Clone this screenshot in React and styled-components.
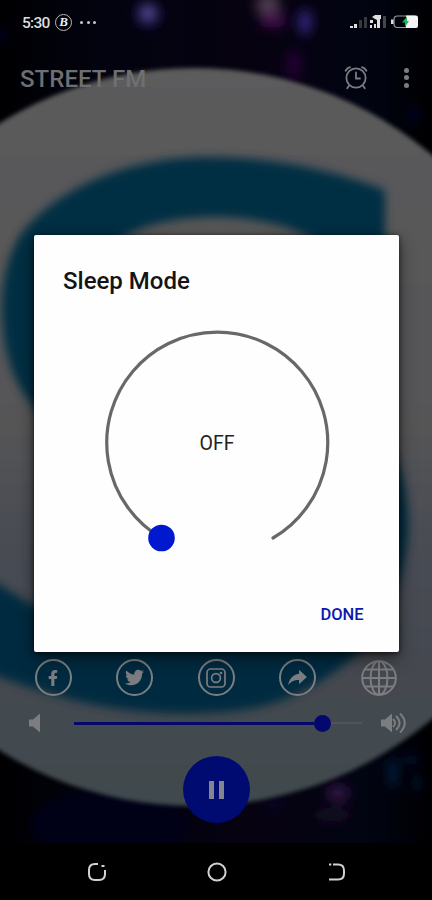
import styled, { createGlobalStyle } from "styled-components";
import { FaFacebookF, FaTwitter } from "react-icons/fa";
import { IoMdShareAlt } from "react-icons/io";

const colors = {
  blue: "#0019cf",
  dimBlue: "#03076e",
  icon: "#7c7d80",
  nav: "#d2d2d2",
};

/* BACKDROP ----------------------------------------------------------------- */
const StreetLogo = () => (
  <StBackdrop viewBox="0 0 432 900" aria-hidden="true">
    <defs>
      <linearGradient id="night" x1="0" y1="0" x2="1" y2="0">
        <stop offset="0" stopColor="#000003" />
        <stop offset="0.25" stopColor="#02030f" />
        <stop offset="0.6" stopColor="#070211" />
        <stop offset="0.85" stopColor="#010411" />
        <stop offset="1" stopColor="#000002" />
      </linearGradient>
      <linearGradient id="disc" x1="0" y1="0" x2="0" y2="1">
        <stop offset="0" stopColor="#5b5b5b" />
        <stop offset="0.45" stopColor="#565658" />
        <stop offset="0.68" stopColor="#474b52" />
        <stop offset="1" stopColor="#414a4e" />
      </linearGradient>
      <linearGradient id="letter" x1="0" y1="0" x2="0" y2="1">
        <stop offset="0" stopColor="#002e43" />
        <stop offset="1" stopColor="#002b40" />
      </linearGradient>
      <filter id="soft2" x="-10%" y="-10%" width="120%" height="120%">
        <feGaussianBlur stdDeviation="2" />
      </filter>
      <filter id="soft5" x="-10%" y="-10%" width="120%" height="120%">
        <feGaussianBlur stdDeviation="5" />
      </filter>
      <filter id="glow" x="-100%" y="-100%" width="300%" height="300%">
        <feGaussianBlur stdDeviation="6" />
      </filter>
    </defs>
    <rect width="432" height="900" fill="url(#night)" />
    <g filter="url(#glow)">
      <circle cx="148" cy="14" r="13" fill="#1c1850" />
      <circle cx="148" cy="13" r="5" fill="#655ca8" />
      <ellipse cx="268" cy="5" rx="12" ry="12" fill="#4d3b4d" />
      <ellipse cx="273" cy="20" rx="13" ry="8" fill="#420a4b" />
      <ellipse cx="305" cy="22" rx="7" ry="13" fill="#33227b" />
      <ellipse cx="294" cy="65" rx="8" ry="16" fill="#220430" />
      <circle cx="414" cy="115" r="5" fill="#070640" />
      <circle cx="1" cy="35" r="5" fill="#05043b" />
      <ellipse cx="110" cy="825" rx="80" ry="35" fill="#010412" />
      <ellipse cx="338" cy="793" rx="12" ry="8" fill="#331246" />
      <ellipse cx="332" cy="815" rx="20" ry="7" fill="#160821" />
      <circle cx="276" cy="805" r="5" fill="#14093a" />
      <ellipse cx="393" cy="773" rx="4" ry="16" fill="#07214c" />
      <ellipse cx="411" cy="760" rx="8" ry="6" fill="#06102f" />
      <ellipse cx="417" cy="783" rx="3" ry="10" fill="#06163d" />
    </g>
    <circle
      cx="194"
      cy="437"
      r="369"
      fill="url(#disc)"
      filter="url(#soft2)"
    />
    <g filter="url(#soft5)">
      <path
        d="M385 190C325 167 265 157 205 157C125 158 60 188 24 230C-4 267 -2 330 12 370C35 432 100 460 200 475L290 520L230 610L100 625L34 606L-20 573V670C35 690 90 710 165 713C250 716 290 703 330 675C376 646 406 585 408 530C409 455 380 410 300 390L120 330L118 242C155 209 270 210 314 240L385 290Z"
        fill="url(#letter)"
      />
    </g>
    <rect y="843" width="432" height="57" fill="#000" />
  </StBackdrop>
);

/* ICONS -------------------------------------------------------------------- */
const StatusIcons = () => (
  <svg width="72" height="18" viewBox="348 13 72 18" fill="#dedede">
    <path d="M350 26h3v2h-3zM354 24h3v4h-3z" />
    <path d="M359 20h3v8h-3zM364 17h3v11h-3z" fill="#38383d" />
    <path d="M370 25h2v3h-2zM370 20h3v3h-3zM372 17l3-2h6v4h-1v9h-3v-8l-2-1zM374 24h2v4h-2z" />
    <path d="M383 16h3v12h-3z" fill="#45454a" />
    <rect x="394" y="16" width="23" height="11.500" rx="3.500" fill="none" stroke="#999" strokeWidth="1.200" />
    <path d="M391 19.500h2.500v4.500h-2.500z" />
    <path d="M406 15.500h10q2 0 2 2v8.500q0 2-2 2h-10z" fill="#f4f4f4" />
    <path d="M407 16.500l-5 6h3v4.500l4-6h-2z" fill="#20b45a" />
  </svg>
);

const AlarmIcon = () => (
  <svg width="24" height="24" viewBox="0 0 24 24" fill="none" stroke={colors.icon} strokeWidth="1.8" strokeLinecap="round">
    <circle cx="12" cy="12" r="9.6" />
    <path d="M12 6.5V12.500h4" />
    <path d="M1.6 4.800Q3 2.300 6 1.200M22.4 4.800Q21 2.300 18 1.200M4.800 20l-1.600 2.300M19.200 20l1.600 2.300" />
  </svg>
);

const InstagramIcon = () => (
  <svg width="20" height="20" viewBox="0 0 20 20" fill="none" stroke={colors.icon} strokeWidth="1.7">
    <rect x="1" y="1" width="18" height="18" rx="3.500" />
    <circle cx="10" cy="10" r="4.4" />
    <circle cx="15" cy="5" r="0.5" />
  </svg>
);

const GlobeIcon = () => (
  <svg width="36" height="36" viewBox="0 0 36 36" fill="none" stroke={colors.icon} strokeWidth="2">
    <circle cx="18" cy="18" r="16.8" />
    <ellipse cx="18" cy="18" rx="8.5" ry="16.8" />
    <path d="M18 1v34M1 18h34M4 9.5h28M4 26.5h28" />
  </svg>
);

const SpeakerIcon = ({ loud }) => (
  <svg width={loud ? 27 : 14} height="22" viewBox={`0 0 ${loud ? 27 : 14} 22`} fill={colors.icon}>
    <path d="M1 7.5h4L12 1.5v19L5 14.5H1z" />
    {loud && (
      <g fill="none" stroke={colors.icon} strokeWidth="1.9">
        <path d="M13 7q4 4 0 8M16 4q7 7 0 14M20 1.5q9.500 9.500 0 19" />
      </g>
    )}
  </svg>
);

const SOCIALS = [
  { name: "facebook", icon: <FaFacebookF size={16} /> },
  { name: "twitter", icon: <FaTwitter size={19} /> },
  { name: "instagram", icon: <InstagramIcon /> },
  { name: "share", icon: <IoMdShareAlt size={25} /> },
  { name: "website", icon: <GlobeIcon />, plain: true },
];

const App = () => {
  return (
    <Screen>
      <GlobalStyle />
      <StreetLogo />
      <StatusBar>
        <StTime>5:30</StTime>
        <StBadge>B</StBadge>
        <StDots>
          <i />
          <i />
          <i />
        </StDots>
        <StatusIcons />
      </StatusBar>
      <Toolbar>
        <h1>STREET FM</h1>
        <AlarmIcon />
        <StMenu>
          <i />
          <i />
          <i />
        </StMenu>
      </Toolbar>
      <Player>
        <SocialRow>
          {SOCIALS.map(({ name, icon, plain }) => (
            <SocialButton key={name} aria-label={name} $plain={plain}>
              {icon}
            </SocialButton>
          ))}
        </SocialRow>
        <VolumeRow>
          <SpeakerIcon />
          <StTrack>
            <StFill />
            <StThumb />
            <StRest />
          </StTrack>
          <SpeakerIcon loud />
        </VolumeRow>
        <PlayButton aria-label="pause">
          <i />
          <i />
        </PlayButton>
      </Player>
      <NavBar>
        <svg width="20" height="20" viewBox="0 0 20 20">
          <path d="M11 2H8Q2 2 2 8v4q0 6 6 6h4q6 0 6-6V8" />
          <path d="M14.500 4h3" />
        </svg>
        <svg width="20" height="20" viewBox="0 0 20 20">
          <circle cx="10" cy="10" r="8.600" />
        </svg>
        <svg width="20" height="20" viewBox="0 0 20 20">
          <path d="M2 2.500h2.300M6 2.500H11q6 0 6 6v3q0 6-6 6H2" />
        </svg>
      </NavBar>
      <DialogLayer>
        <Dialog role="dialog">
          <h2>Sleep Mode</h2>
          <Dial>
            <svg width="240" height="240" viewBox="0 0 240 240">
              <path d="M64.500 215A110.500 110.500 0 1 1 176 215" fill="none" stroke="#686868" strokeWidth="3.200" strokeLinecap="round" />
              <circle cx="64.500" cy="215" r="13.300" fill={colors.blue} />
            </svg>
            <span>OFF</span>
          </Dial>
          <DoneButton>DONE</DoneButton>
        </Dialog>
      </DialogLayer>
    </Screen>
  );
};

export default App;

const GlobalStyle = createGlobalStyle`
  * {
    box-sizing: border-box;
  }

  body {
    margin: 0;
    background: #000;
    font-family: Roboto, sans-serif;
  }

  h1, h2 {
    margin: 0;
  }

  button {
    padding: 0;
    border: none;
    background: none;
    font-family: inherit;
  }

  svg {
    display: block;
    flex: none;
  }
`;

const Screen = styled.main`
  position: relative;
  display: flex;
  flex-direction: column;
  width: 432px;
  height: 900px;
  overflow: hidden;
`;

const StBackdrop = styled.svg`
  position: absolute;
  inset: 0;
  z-index: -1;
  width: 432px;
  height: 900px;
`;

const StatusBar = styled.header`
  display: flex;
  align-items: center;
  height: 44px;
  padding: 0 12px 0 22px;

  > svg {
    margin-left: auto;
  }
`;

const StTime = styled.span`
  width: 33px;
  padding-top: 1px;
  color: #dedede;
  font-size: 15.5px;
  font-weight: 500;
  letter-spacing: -0.7px;
`;

const StBadge = styled.span`
  display: flex;
  align-items: center;
  justify-content: center;
  width: 17px;
  height: 17px;
  border: 1.5px solid #b8b8b8;
  border-radius: 50%;
  color: #eee;
  font: italic bold 13px "Liberation Serif", serif;
`;

const StDots = styled.span`
  display: flex;
  gap: 3.5px;
  margin-left: 8px;

  i {
    width: 3px;
    height: 3px;
    border-radius: 50%;
    background: #c8c8c8;
  }
`;

const Toolbar = styled.div`
  display: flex;
  align-items: center;
  height: 67px;
  padding: 0 23px 0 20px;

  h1 {
    flex: 1;
    padding-top: 2px;
    color: #6e6f72;
    font-size: 24px;
    font-weight: 500;
    letter-spacing: 0.05px;
  }
`;

const StMenu = styled.div`
  display: flex;
  flex-direction: column;
  gap: 2.5px;
  margin-left: 36px;

  i {
    width: 5px;
    height: 5px;
    border-radius: 50%;
    background: ${colors.icon};
  }
`;

const Player = styled.section`
  display: flex;
  flex: 1;
  flex-direction: column;
  align-items: center;
  justify-content: flex-end;
  padding-bottom: 20px;
`;

const SocialRow = styled.div`
  display: flex;
  justify-content: space-between;
  width: 363px;
  margin-bottom: 16px;
`;

const SocialButton = styled.button`
  display: flex;
  align-items: center;
  justify-content: center;
  width: 37px;
  height: 37px;
  border: ${({ $plain }) => ($plain ? "none" : `2px solid ${colors.icon}`)};
  border-radius: 50%;
  color: ${colors.icon};
`;

const VolumeRow = styled.div`
  display: flex;
  align-items: center;
  justify-content: space-between;
  width: 100%;
  height: 22px;
  margin-bottom: 22px;
  padding: 0 25px 0 28px;
`;

const StTrack = styled.div`
  display: flex;
  align-items: center;
  width: 288px;
  margin-left: 13px;
`;

const StFill = styled.div`
  width: 240px;
  height: 3px;
  background: ${colors.dimBlue};
`;

const StThumb = styled.div`
  width: 17px;
  height: 17px;
  border-radius: 50%;
  background: ${colors.dimBlue};
`;

const StRest = styled.div`
  flex: 1;
  height: 2px;
  background: #50555b;
`;

const PlayButton = styled.button`
  display: flex;
  align-items: center;
  justify-content: center;
  gap: 5px;
  width: 67px;
  height: 67px;
  margin-left: 1px;
  border-radius: 50%;
  background: #000b72;

  i {
    width: 5px;
    height: 18px;
    background: #85868d;
  }
`;

const NavBar = styled.nav`
  display: flex;
  align-items: center;
  justify-content: center;
  gap: 100px;
  height: 57px;
  padding-left: 1px;

  svg {
    fill: none;
    stroke: ${colors.nav};
    stroke-width: 2;
  }
`;

const DialogLayer = styled.div`
  position: absolute;
  inset: 0;
  display: flex;
  justify-content: center;
  padding: 235px 0 0 1px;
`;

const Dialog = styled.section`
  display: flex;
  flex-direction: column;
  align-items: center;
  width: 365px;
  height: 417px;
  padding: 30px 28px 0 29px;
  border-radius: 2px;
  background: #fefefe;
  box-shadow: 0 6px 16px rgba(0, 0, 0, 0.5), 0 1px 5px rgba(0, 0, 0, 0.6);

  h2 {
    align-self: flex-start;
    color: #141414;
    font-size: 24px;
    font-weight: 500;
    line-height: 32px;
  }
`;

const Dial = styled.div`
  display: grid;
  place-items: center;
  margin-top: 26px;

  svg,
  span {
    grid-area: 1 / 1;
  }

  span {
    color: #222;
    font-size: 19.5px;
  }
`;

const DoneButton = styled.button`
  align-self: flex-end;
  width: 64px;
  height: 36px;
  margin: 33px -3px 0 0;
  color: #0a18b0;
  font-size: 16.5px;
  font-weight: 500;
`;
